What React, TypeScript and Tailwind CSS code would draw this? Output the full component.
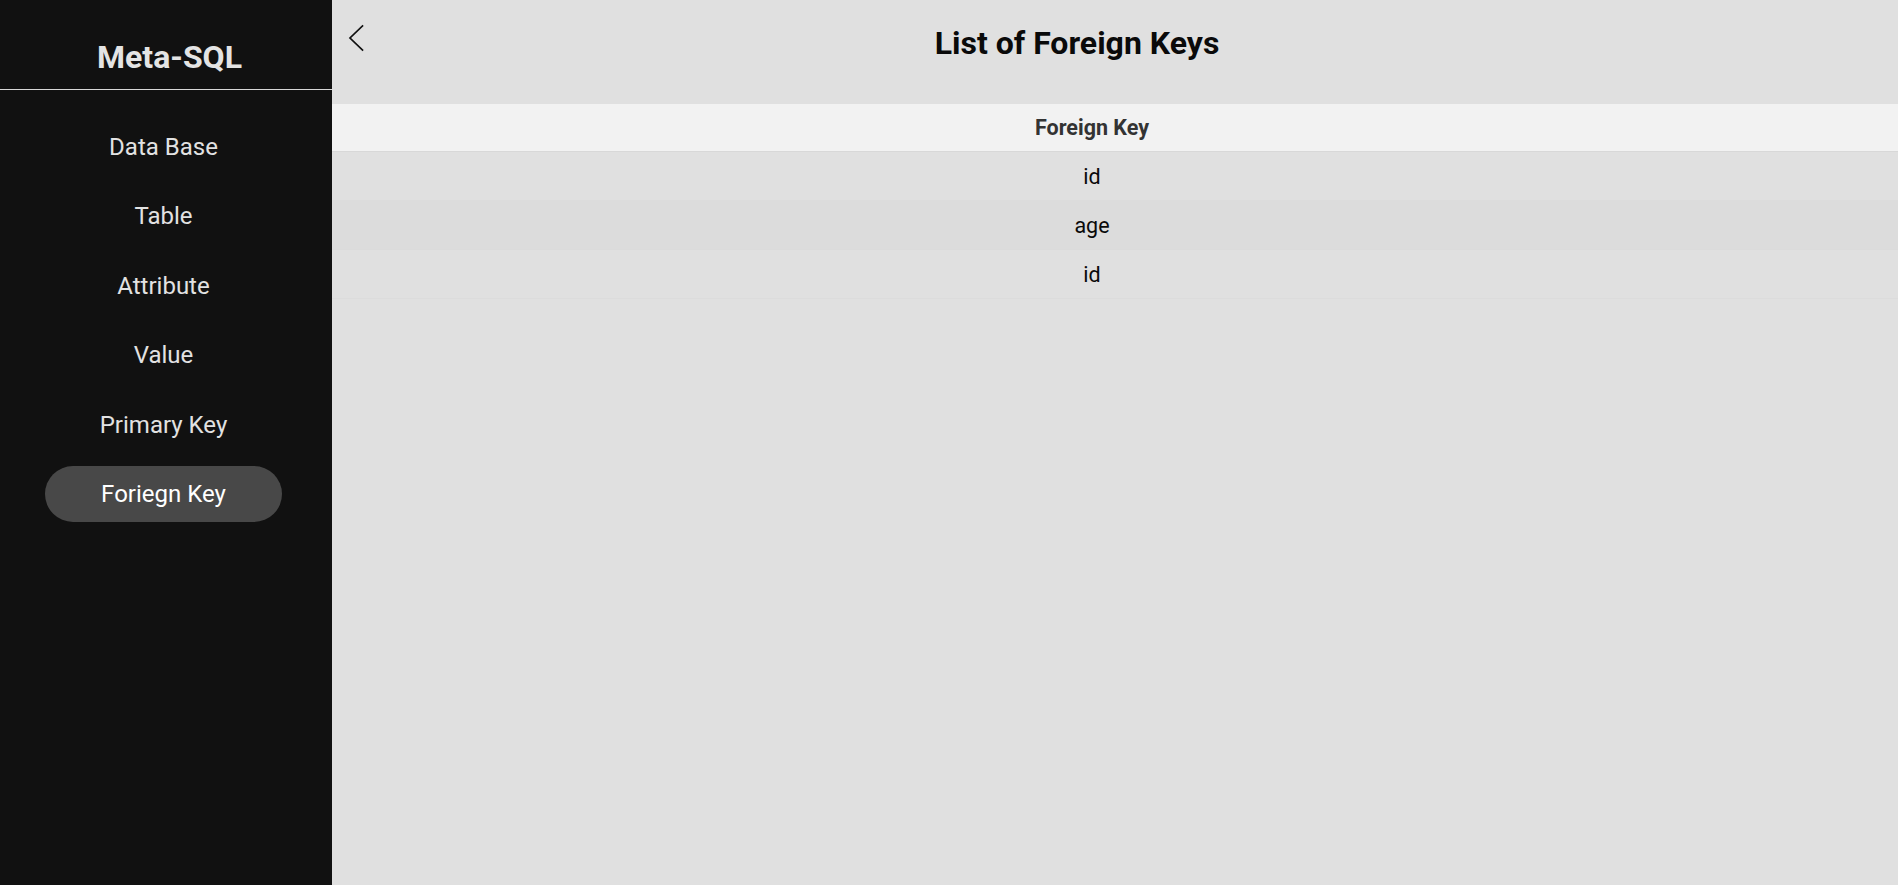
import React from "react";

const navItems = ["Data Base", "Table", "Attribute", "Value", "Primary Key", "Foriegn Key"];
const rows = ["id", "age", "id"];

export default function App() {
  return (
    <div
      className="flex h-[885px] w-full overflow-hidden"
      style={{ fontFamily: "Roboto, 'Noto Sans', sans-serif" }}
    >
      <aside className="flex h-full w-[332px] shrink-0 flex-col bg-[#111111]">
        <div className="flex h-[89px] items-center justify-center pl-[7px] pt-[24px]">
          <h1 className="text-[32px] font-bold leading-[38px] text-[#e4e4e4]">Meta-SQL</h1>
        </div>
        <div className="h-px w-full bg-[#d8d8d8]" />
        <nav className="mt-[28.5px] flex flex-col gap-[13.5px]">
          {navItems.map((item) => {
            const active = item === "Foriegn Key";
            return (
              <div
                key={item}
                className={
                  active
                    ? "ml-[45px] flex h-[56px] w-[237px] items-center justify-center rounded-full bg-[#484848] text-[24px] text-white"
                    : "ml-[45px] flex h-[56px] w-[237px] items-center justify-center rounded-full text-[24px] text-[#e2e2e2]"
                }
              >
                {item}
              </div>
            );
          })}
        </nav>
      </aside>
      <main className="flex-1 bg-[#e0e0e0]">
        <header className="relative h-[104px]">
          <button className="absolute left-[14px] top-[24px] flex h-[28px] w-[20px] items-center justify-center">
            <svg width="16" height="28" viewBox="0 0 16 28" fill="none">
              <polyline
                points="14.5,2 2,14 14.5,26"
                stroke="#111"
                strokeWidth="1.7"
                strokeLinecap="square"
                strokeLinejoin="miter"
              />
            </svg>
          </button>
          <h2 className="pr-[76px] pt-[24px] text-center text-[32px] font-bold leading-[38px] text-[#0a0a0a]">
            List of Foreign Keys
          </h2>
        </header>
        <div className="w-full">
          <div className="flex h-[48px] items-center justify-center border-b border-[#d8d8d8] bg-[#f2f2f2] pr-[46px] pt-[2px] text-[21.5px] font-bold text-[#333333]">
            Foreign Key
          </div>
          {rows.map((r, i) => (
            <div
              key={i}
              className={
                i % 2 === 1
                  ? "flex h-[49px] items-center justify-center border-b border-[#dbdbdb] bg-[#dcdcdc] pr-[46px] pt-[2px] text-[21.5px] text-[#0a0a0a]"
                  : "flex h-[49px] items-center justify-center border-b border-[#dcdcdc] bg-[#e0e0e0] pr-[46px] pt-[2px] text-[21.5px] text-[#0a0a0a]"
              }
            >
              {r}
            </div>
          ))}
        </div>
      </main>
    </div>
  );
}
